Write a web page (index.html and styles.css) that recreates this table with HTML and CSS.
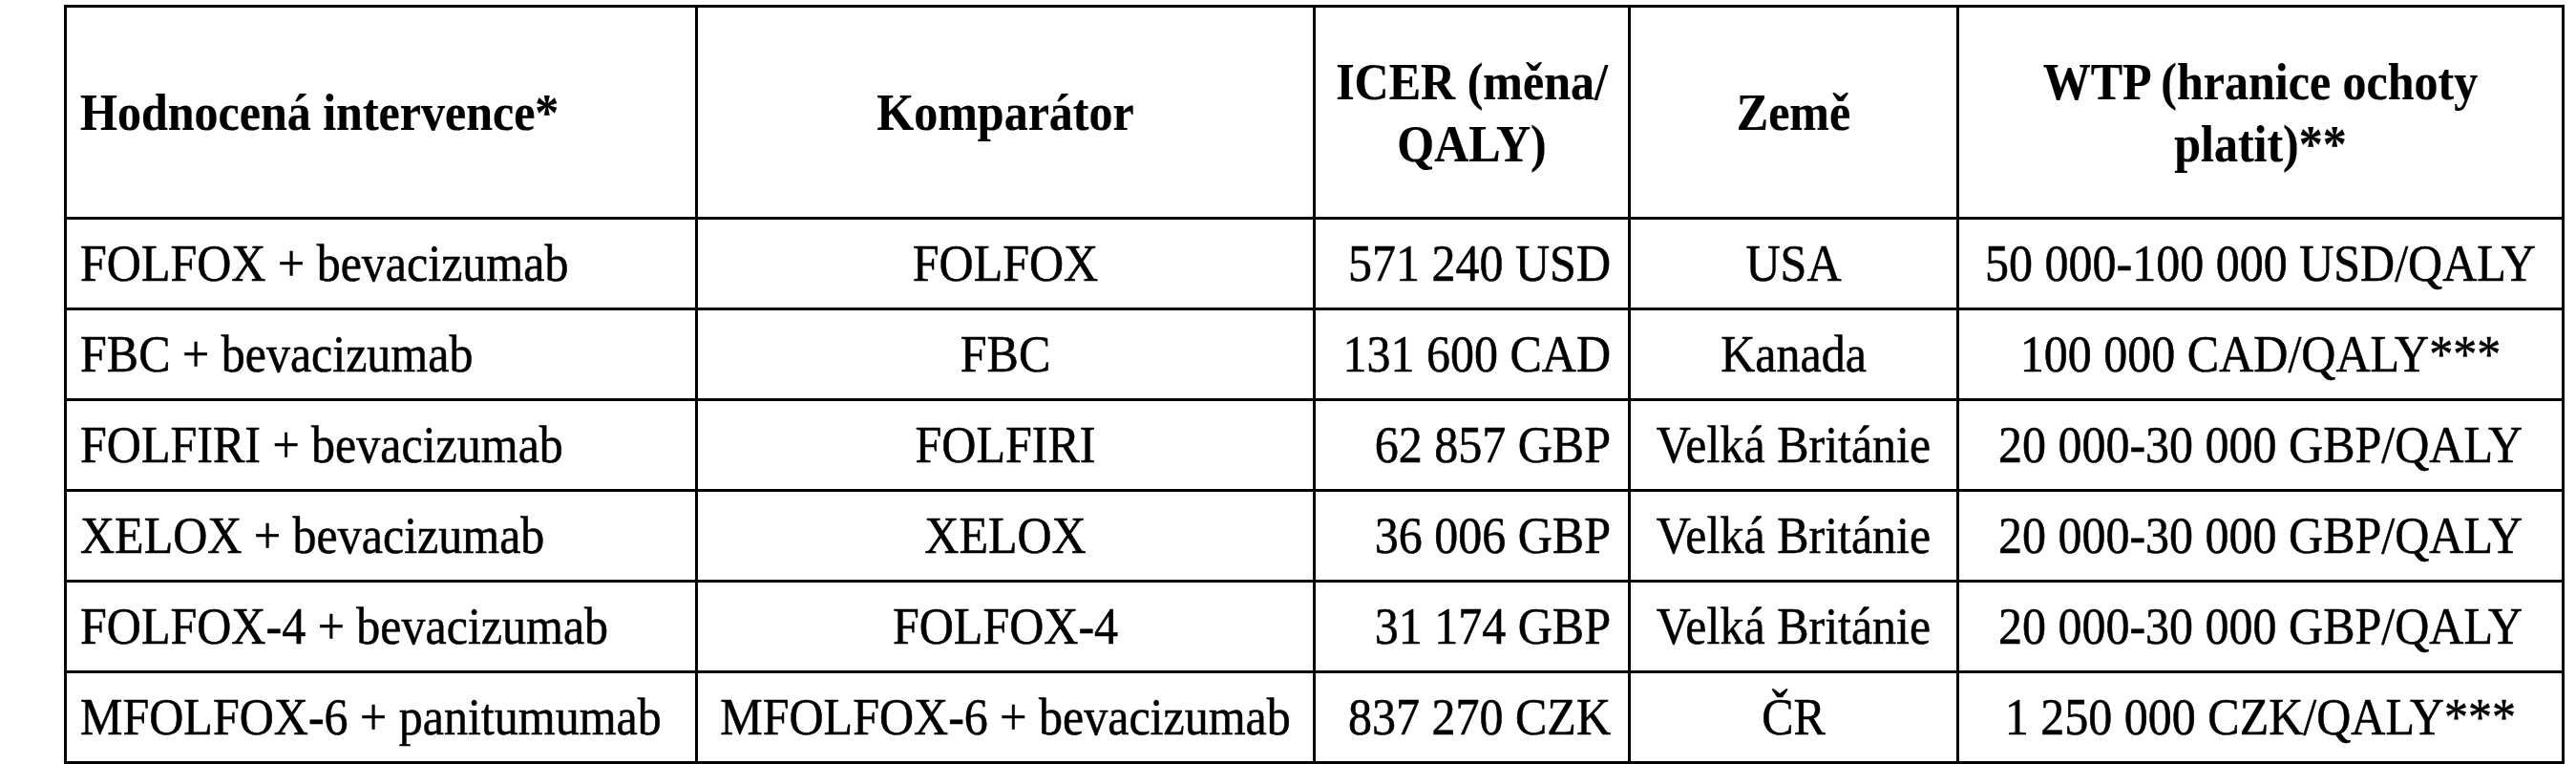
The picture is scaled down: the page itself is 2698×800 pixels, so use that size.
FILE: index.html
```html
<!DOCTYPE html>
<html lang="cs">
<head>
<meta charset="utf-8">
<title>ICER tabulka</title>
<link rel="stylesheet" href="styles.css">
</head>
<body>
<table class="icer">
  <colgroup>
    <col class="c1"><col class="c2"><col class="c3"><col class="c4"><col class="c5">
  </colgroup>
  <thead>
    <tr class="head">
      <th class="left"><span class="t">Hodnocená intervence*</span></th>
      <th><span class="t">Komparátor</span></th>
      <th><span class="t">ICER (měna/ QALY)</span></th>
      <th><span class="t">Země</span></th>
      <th><span class="t">WTP (hranice ochoty platit)**</span></th>
    </tr>
  </thead>
  <tbody>
    <tr>
      <td class="left"><span class="t">FOLFOX + bevacizumab</span></td>
      <td><span class="t">FOLFOX</span></td>
      <td class="right"><span class="t">571 240 USD</span></td>
      <td><span class="t">USA</span></td>
      <td><span class="t">50 000-100 000 USD/QALY</span></td>
    </tr>
    <tr>
      <td class="left"><span class="t">FBC + bevacizumab</span></td>
      <td><span class="t">FBC</span></td>
      <td class="right"><span class="t">131 600 CAD</span></td>
      <td><span class="t">Kanada</span></td>
      <td><span class="t">100 000 CAD/QALY***</span></td>
    </tr>
    <tr>
      <td class="left"><span class="t">FOLFIRI + bevacizumab</span></td>
      <td><span class="t">FOLFIRI</span></td>
      <td class="right"><span class="t">62 857 GBP</span></td>
      <td><span class="t">Velká Británie</span></td>
      <td><span class="t">20 000-30 000 GBP/QALY</span></td>
    </tr>
    <tr>
      <td class="left"><span class="t">XELOX + bevacizumab</span></td>
      <td><span class="t">XELOX</span></td>
      <td class="right"><span class="t">36 006 GBP</span></td>
      <td><span class="t">Velká Británie</span></td>
      <td><span class="t">20 000-30 000 GBP/QALY</span></td>
    </tr>
    <tr>
      <td class="left"><span class="t">FOLFOX-4 + bevacizumab</span></td>
      <td><span class="t">FOLFOX-4</span></td>
      <td class="right"><span class="t">31 174 GBP</span></td>
      <td><span class="t">Velká Británie</span></td>
      <td><span class="t">20 000-30 000 GBP/QALY</span></td>
    </tr>
    <tr>
      <td class="left"><span class="t">MFOLFOX-6 + panitumumab</span></td>
      <td><span class="t">MFOLFOX-6 + bevacizumab</span></td>
      <td class="right"><span class="t">837 270 CZK</span></td>
      <td><span class="t">ČR</span></td>
      <td><span class="t">1 250 000 CZK/QALY***</span></td>
    </tr>
  </tbody>
</table>
</body>
</html>
```

FILE: styles.css
```css
html, body {
  margin: 0;
  padding: 0;
  background: #ffffff;
}

body {
  padding: 5px 0 0 67px;
  font-family: "Liberation Serif", "Times New Roman", serif;
  color: #000000;
}

.icer {
  border-collapse: collapse;
  table-layout: fixed;
  width: 2616px;
  font-size: 50px;
}

.c1 { width: 661px; }
.c2 { width: 647px; }
.c3 { width: 330px; }
.c4 { width: 344px; }
.c5 { width: 634px; }

.icer th,
.icer td {
  border: 3px solid #000000;
  text-align: center;
  vertical-align: middle;
  padding: 0 14px;
  line-height: 1.2;
}

.icer th {
  font-weight: bold;
  height: 219px;
  -webkit-text-stroke: 0.2px #000000;
}

.icer td {
  height: 92px;
  -webkit-text-stroke: 0.5px #000000;
}

.icer .t {
  display: inline-block;
  transform: scaleY(1.08);
}

.icer .left {
  text-align: left;
}

.icer .right {
  text-align: right;
  padding-right: 18px;
}
```
